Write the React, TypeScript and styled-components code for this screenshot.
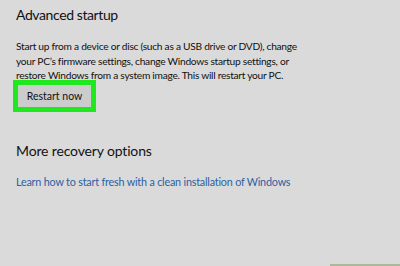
import React from "react";
import styled, { createGlobalStyle } from "styled-components";

const Global = createGlobalStyle`
  html, body { margin: 0; padding: 0; background: #dadada; }
  body { width: 400px; height: 266px; overflow: hidden; font-family: Lato, "Open Sans", sans-serif; }
`;

const Page = styled.div`
  position: relative;
  width: 400px;
  height: 266px;
  background: #dadada;
  box-sizing: border-box;
  padding: 5px 16px 0 16px;
  display: flex;
  flex-direction: column;
`;

const Title = styled.h2<{ $mt?: number; $ls?: number }>`
  margin: ${(p) => p.$mt ?? 0}px 0 0 0;
  font-size: 14px;
  font-weight: 400;
  letter-spacing: ${(p) => p.$ls ?? -0.3}px;
  color: #111;
  line-height: 20px;
`;

const Body = styled.p`
  margin: 14px 0 0 0;
  font-size: 10.2px;
  letter-spacing: -0.27px;
  line-height: 14.5px;
  color: #111;
`;

const Highlight = styled.div`
  margin: -3px 0 0 -3px;
  align-self: flex-start;
  border: 5px solid #1fe81f;
  display: flex;
`;

const Button = styled.button`
  border: none;
  background: #cccccc;
  font-family: inherit;
  font-size: 10.5px;
  color: #111;
  width: 73px;
  height: 22px;
  padding: 0;
  cursor: pointer;
`;

const Link = styled.a`
  margin-top: 14px;
  font-size: 10.8px;
  letter-spacing: -0.2px;
  line-height: 14px;
  color: #2c5fa2;
  text-decoration: none;
`;

const BottomBar = styled.div`
  position: absolute;
  left: 330px;
  right: 0;
  bottom: 0;
  height: 2px;
  background: #a9b99a;
`;

export default function App() {
  return (
    <>
      <Global />
      <Page>
        <Title $ls={-0.4}>Advanced startup</Title>
        <Body>
          Start up from a device or disc (such as a USB drive or DVD), change
          <br />
          your PC’s firmware settings, change Windows startup settings, or
          <br />
          restore Windows from a system image. This will restart your PC.
        </Body>
        <Highlight>
          <Button>Restart now</Button>
        </Highlight>
        <Title $mt={29} $ls={-0.15}>More recovery options</Title>
        <Link href="#">Learn how to start fresh with a clean installation of Windows</Link>
        <BottomBar />
      </Page>
    </>
  );
}
